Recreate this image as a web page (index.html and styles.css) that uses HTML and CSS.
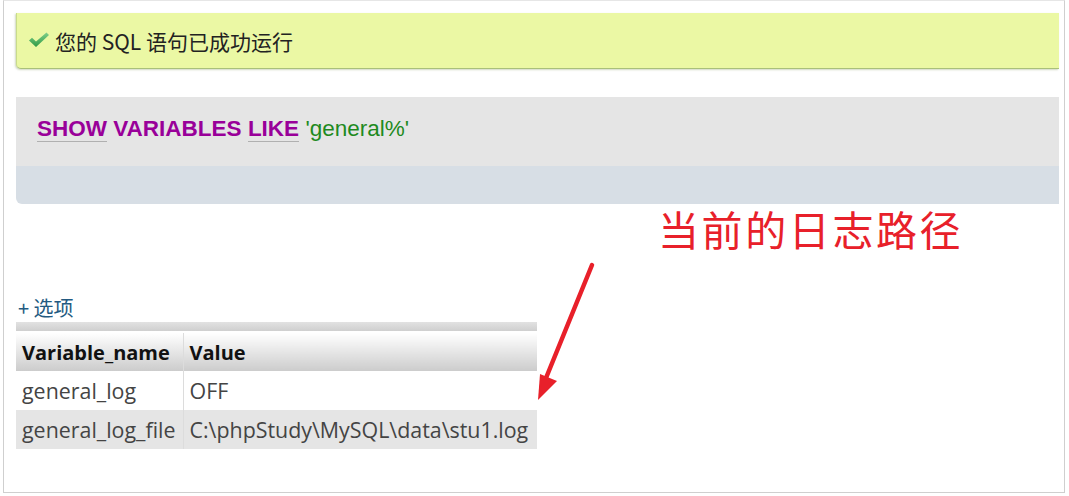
FILE: index.html
```html
<!DOCTYPE html>
<html lang="zh">
<head>
<meta charset="utf-8">
<title>SQL result</title>
<link rel="stylesheet" href="styles.css">
</head>
<body>
<div class="frame">
  <div class="success">
    <svg class="check" width="22" height="16" viewBox="0 0 22 16">
      <defs>
        <linearGradient id="g" x1="0" y1="0" x2="0" y2="1">
          <stop offset="0" stop-color="#7fd08a"/>
          <stop offset="1" stop-color="#2f9a45"/>
        </linearGradient>
      </defs>
      <path d="M1 8.5 L4 5.8 L8 9.5 L18.5 0.5 L21 3 L8 15 Z" fill="url(#g)"/>
    </svg>
    <span>您的 SQL 语句已成功运行</span>
  </div>

  <div class="sqlbox">
    <div class="sqltext">
      <span class="kw ul">SHOW</span> <span class="kw">VARIABLES</span> <span class="kw ul">LIKE</span> <span class="str">'general%'</span>
    </div>
    <div class="sqlbar"></div>
  </div>

  <div class="results">
    <div class="options">+ 选项</div>
    <div class="tablebar"></div>
    <table class="data">
      <thead>
        <tr><th class="c1">Variable_name</th><th class="c2">Value</th></tr>
      </thead>
      <tbody>
        <tr class="odd"><td>general_log</td><td>OFF</td></tr>
        <tr class="even"><td>general_log_file</td><td>C:\phpStudy\MySQL\data\stu1.log</td></tr>
      </tbody>
    </table>

    <div class="note">当前的日志路径</div>
    <svg class="arrow" width="80" height="150" viewBox="0 0 80 150">
      <path d="M60 5 L14 118" stroke="#e8202a" stroke-width="4.5" stroke-linecap="round" fill="none"/>
      <path d="M6 140 L8 114 L25 121 Z" fill="#e8202a"/>
    </svg>
  </div>
</div>
</body>
</html>
```

FILE: styles.css
```css
* { box-sizing: border-box; }
html, body { margin: 0; padding: 0; background: #fff; }
body { font-family: "Open Sans", "Noto Sans CJK SC", sans-serif; }

.frame {
  margin-left: 3px;
  width: 1062px;
  height: 493px;
  border: 1px solid #cfcfcf;
  border-top-color: #e6e6e6;
  padding: 12px 5px 0 12px;
}

.success {
  height: 56px;
  background: #ebf8a4;
  border-left: 1px solid #c9dc8a;
  border-bottom: 1px solid #a9c07a;
  border-radius: 0 0 0 5px;
  box-shadow: -1px 1px 2px rgba(120,140,80,0.35);
  display: flex;
  align-items: center;
  padding-left: 11px;
  color: #222;
  font-family: "Noto Sans CJK SC", "Noto Sans", sans-serif;
  font-size: 21px;
}
.check { margin-right: 5px; margin-top: -2px; }

.sqlbox {
  margin-top: 28px;
  height: 107px;
  border-radius: 0 0 0 6px;
  overflow: hidden;
  display: flex;
  flex-direction: column;
}
.sqltext {
  height: 69px;
  background: #e5e5e5;
  padding: 18px 0 0 21px;
  font-family: "Liberation Sans", Arial, sans-serif;
  font-size: 22.5px;
  line-height: 28px;
}
.kw { color: #990099; font-weight: bold; }
.ul { border-bottom: 1px solid #b0b0b0; }
.str { color: #1e8a1e; }
.sqlbar { flex: 1; background: #d7dee5; }

.results { position: relative; padding-top: 92px; }
.options {
  color: #235a81;
  font-family: "Noto Sans CJK SC", sans-serif;
  font-size: 20px;
  line-height: 24px;
  padding-left: 2px;
}
.tablebar {
  margin-top: 2px;
  width: 521px;
  height: 9px;
  background: linear-gradient(#e2e2e2, #cfcfcf);
}
.data {
  margin-top: 2px;
  width: 521px;
  border-collapse: collapse;
  font-family: "Open Sans", sans-serif;
  font-size: 21.4px;
  color: #444;
}
.data th, .data td {
  height: 39px;
  padding: 0 6px;
  text-align: left;
  white-space: nowrap;
}
.data th {
  color: #111;
  font-size: 20px;
  font-weight: bold;
  height: 38px;
  background: linear-gradient(#ffffff, #cccccc);
}
.data th.c1, .data td:first-child { width: 167px; border-right: 1px solid #dcdcdc; }
.data tr.odd td { background: #fff; }
.data tr.even td { background: #e5e5e5; }

.note {
  position: absolute;
  left: 642px;
  top: -1px;
  color: #e8202a;
  font-family: "Noto Sans CJK SC", sans-serif;
  font-size: 41px;
  line-height: 50px;
  letter-spacing: 2.6px;
}
.arrow {
  position: absolute;
  left: 516px;
  top: 56px;
}
```
